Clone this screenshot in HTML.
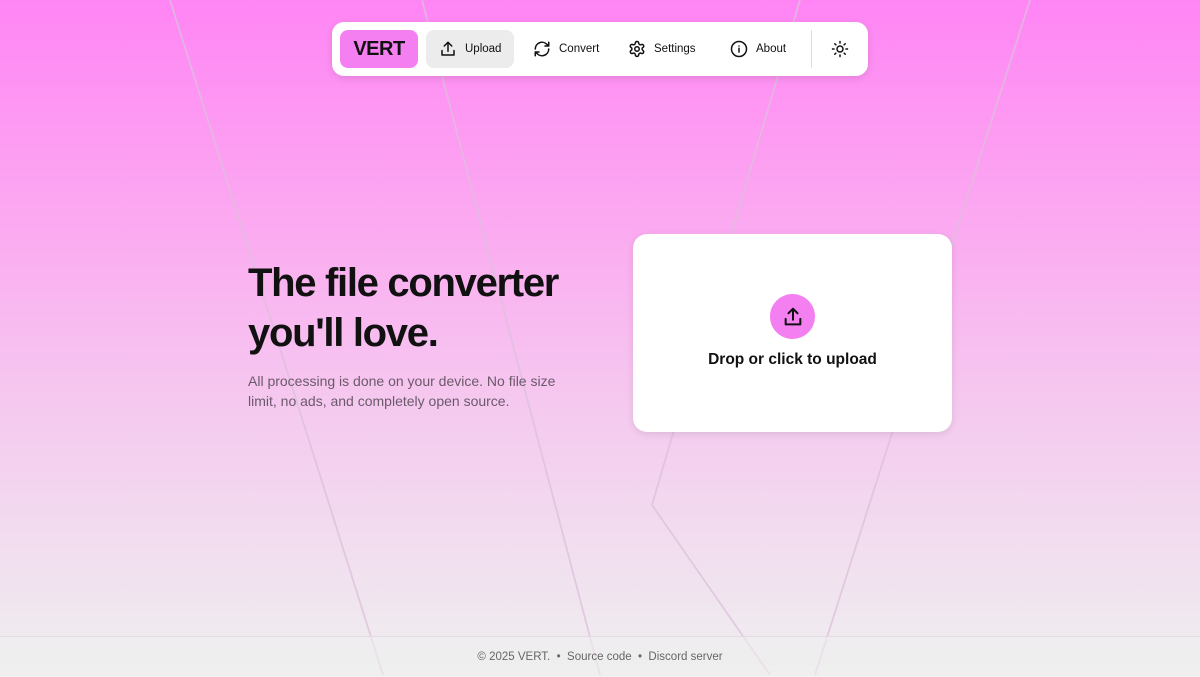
<!DOCTYPE html>
<html><head><meta charset="utf-8"><style>
*{margin:0;padding:0;box-sizing:border-box}
html{background:#f0f0f0}
body{width:1200px;height:675px;overflow:hidden;position:relative;font-family:"Liberation Sans",sans-serif;background:linear-gradient(180deg,#ff85f5 0%,#fca6f1 30%,#f5c9ef 60%,#f0e6ef 90%,#f0f0f0 100%)}
svg.bg{position:absolute;left:0;top:0}
nav{position:absolute;left:332px;top:22px;width:536px;height:54px;background:#fff;border-radius:12px;box-shadow:0 2px 8px rgba(0,0,0,.12)}
.logo{position:absolute;left:8px;top:8px;width:78px;height:38px;background:#f37ff0;border-radius:8px;font-weight:bold;font-size:20px;display:flex;align-items:center;justify-content:center;color:#111;letter-spacing:-.5px}
.sel{position:absolute;left:94px;top:8px;width:88px;height:38px;background:#ececec;border-radius:8px}
.ic{position:absolute;top:18px;width:18px;height:18px}
.tx{position:absolute;top:21px;font-size:11.5px;color:#111}
h1{position:absolute;left:248px;top:258px;font-size:40px;line-height:50px;font-weight:bold;letter-spacing:-1.3px;color:#111}
p.d{position:absolute;left:248px;top:371px;font-size:14px;line-height:20px;color:#6b5a6a;width:330px}
.card{position:absolute;left:633px;top:234px;width:319px;height:198px;background:#fff;border-radius:14px;box-shadow:0 2px 8px rgba(0,0,0,.1)}
.circ{position:absolute;left:137px;top:60px;width:45px;height:45px;border-radius:50%;background:#f37ff0;display:flex;align-items:center;justify-content:center}
.card .t{position:absolute;top:117px;width:100%;text-align:center;font-size:15.5px;font-weight:bold;color:#111}
footer{position:absolute;left:0;top:636px;width:1200px;height:39px;background:rgba(238,238,238,.6);border-top:1px solid #e3dde2;text-align:center;font-size:11.5px;line-height:40px;color:#666}
</style></head><body>
<svg class="bg" width="1200" height="675" fill="none" stroke="#dcc0dc" stroke-width="1.8" opacity=".75">
<path d="M170 0 L383 675"/><path d="M422 0 L600 675"/><path d="M800 0 L652 505 L770 675"/><path d="M1030 0 L815 675"/>
</svg>
<nav>
<div class="logo">VERT</div>
<div class="sel"></div>
<svg class="ic" style="left:107px" viewBox="0 0 24 24" fill="none" stroke="#111" stroke-width="2" stroke-linecap="round" stroke-linejoin="round"><path d="M4 14v6h16v-6M12 15V3M7 8l5-5 5 5"/></svg><span class="tx" style="left:133px">Upload</span>
<svg class="ic" style="left:201px" viewBox="0 0 24 24" fill="none" stroke="#111" stroke-width="2" stroke-linecap="round" stroke-linejoin="round"><path d="M3 12a9 9 0 0 1 15.5-6.2L21 8M21 3v5h-5M21 12a9 9 0 0 1-15.5 6.2L3 16M3 21v-5h5"/></svg><span class="tx" style="left:227px">Convert</span>
<svg class="ic" style="left:296px" viewBox="0 0 24 24" fill="none" stroke="#111" stroke-width="2" stroke-linejoin="round"><circle cx="12" cy="12" r="3"/><path d="M12.2 2h-.4a2 2 0 0 0-2 2v.2a2 2 0 0 1-1 1.700l-.4.3a2 2 0 0 1-2 0l-.2-.1a2 2 0 0 0-2.7.7l-.2.4a2 2 0 0 0 .7 2.7l.2.1a2 2 0 0 1 1 1.7v.5a2 2 0 0 1-1 1.7l-.2.1a2 2 0 0 0-.7 2.7l.2.4a2 2 0 0 0 2.7.7l.2-.1a2 2 0 0 1 2 0l.4.3a2 2 0 0 1 1 1.7v.2a2 2 0 0 0 2 2h.4a2 2 0 0 0 2-2v-.2a2 2 0 0 1 1-1.7l.4-.3a2 2 0 0 1 2 0l.2.1a2 2 0 0 0 2.7-.7l.2-.4a2 2 0 0 0-.7-2.7l-.2-.1a2 2 0 0 1-1-1.7v-.5a2 2 0 0 1 1-1.7l.2-.1a2 2 0 0 0 .7-2.7l-.2-.4a2 2 0 0 0-2.7-.7l-.2.1a2 2 0 0 1-2 0l-.4-.3a2 2 0 0 1-1-1.7V4a2 2 0 0 0-2-2z"/></svg><span class="tx" style="left:322px">Settings</span>
<svg class="ic" style="left:398px" viewBox="0 0 24 24" fill="none" stroke="#111" stroke-width="2" stroke-linecap="round"><circle cx="12" cy="12" r="10"/><path d="M12 11v5M12 8h.01"/></svg><span class="tx" style="left:424px">About</span>
<div style="position:absolute;left:479px;top:8px;width:1px;height:38px;background:#ddd"></div>
<svg class="ic" style="left:499px" viewBox="0 0 24 24" fill="none" stroke="#111" stroke-width="2" stroke-linecap="round"><circle cx="12" cy="12" r="4"/><path d="M12 2v2M12 20v2M2 12h2M20 12h2M5 5l1.5 1.5M17.5 17.5L19 19M5 19l1.5-1.5M17.5 6.5L19 5"/></svg>
</nav>
<h1>The file converter<br>you'll love.</h1>
<p class="d">All processing is done on your device. No file size limit, no ads, and completely open source.</p>
<div class="card"><div class="circ"><svg width="22" height="22" viewBox="0 0 24 24" fill="none" stroke="#111" stroke-width="2.2" stroke-linecap="round" stroke-linejoin="round"><path d="M4 14v6h16v-6M12 15V3M7 8l5-5 5 5"/></svg></div><div class="t">Drop or click to upload</div></div>
<footer>© 2025 VERT. &nbsp;•&nbsp; Source code &nbsp;•&nbsp; Discord server</footer>
</body></html>
